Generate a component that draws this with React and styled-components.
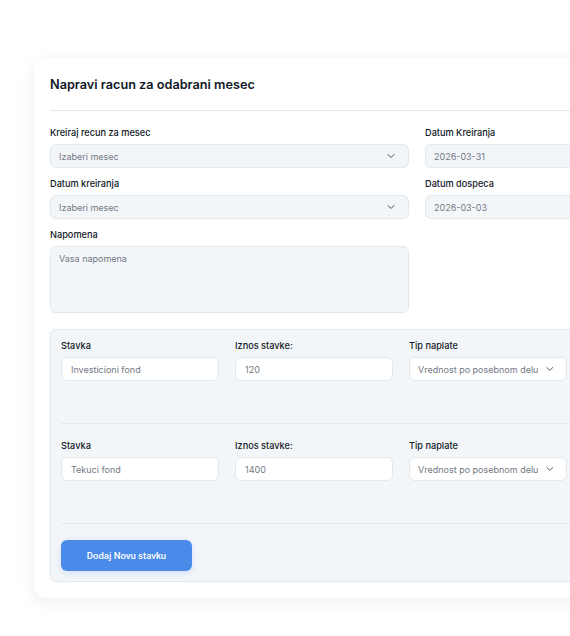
import React from "react";
import styled, { createGlobalStyle } from "styled-components";
import { ChevronDown } from "lucide-react";

const GlobalStyle = createGlobalStyle`
  html, body {
    margin: 0;
    overflow: hidden;
    background: #ffffff;
  }
  body {
    font-family: Inter, "Noto Sans", sans-serif;
    color: #111827;
  }
`;

const stavke = [
  { id: 1, naziv: "Investicioni fond", iznos: "120" },
  { id: 2, naziv: "Tekuci fond", iznos: "1400" },
];

export default function App() {
  return (
    <>
      <GlobalStyle />
      <Page>
        <Card>
          <Title>Napravi racun za odabrani mesec</Title>
          <Divider />
          <FormGrid>
            <Field>
              <Label>Kreiraj recun za mesec</Label>
              <SelectBox>
                <span>Izaberi mesec</span>
                <ChevronDown size={12} strokeWidth={2} />
              </SelectBox>
            </Field>
            <Field>
              <Label>Datum Kreiranja</Label>
              <ReadOnlyBox>2026-03-31</ReadOnlyBox>
            </Field>
            <Field>
              <Label>Datum kreiranja</Label>
              <SelectBox>
                <span>Izaberi mesec</span>
                <ChevronDown size={12} strokeWidth={2} />
              </SelectBox>
            </Field>
            <Field>
              <Label>Datum dospeca</Label>
              <ReadOnlyBox>2026-03-03</ReadOnlyBox>
            </Field>
            <Field>
              <Label>Napomena</Label>
              <NoteBox>Vasa napomena</NoteBox>
            </Field>
          </FormGrid>

          <ItemsPanel>
            {stavke.map((s) => (
              <ItemRow key={s.id}>
                <Field>
                  <Label>Stavka</Label>
                  <WhiteBox>{s.naziv}</WhiteBox>
                </Field>
                <Field>
                  <Label>Iznos stavke:</Label>
                  <WhiteBox>{s.iznos}</WhiteBox>
                </Field>
                <Field>
                  <Label>Tip naplate</Label>
                  <WhiteSelect>
                    <span>Vrednost po posebnom delu</span>
                    <ChevronDown size={12} strokeWidth={2} />
                  </WhiteSelect>
                </Field>
              </ItemRow>
            ))}
            <AddButton>Dodaj Novu stavku</AddButton>
          </ItemsPanel>
        </Card>
      </Page>
    </>
  );
}

const Page = styled.div`
  padding: 58px 0 40px 34px;
  width: 720px;
`;

const Card = styled.div`
  width: 640px;
  background: #ffffff;
  border-radius: 12px;
  padding: 16px;
  box-sizing: border-box;
  box-shadow: 0 4px 18px rgba(15, 23, 42, 0.07), 0 0 2px rgba(15, 23, 42, 0.04);
`;

const Title = styled.h2`
  margin: 0;
  font-size: 12.7px;
  line-height: 21px;
  font-weight: 600;
  color: #111827;
`;

const Divider = styled.div`
  height: 1px;
  background: #e5e7eb;
  margin: 15px 0 16px;
`;

const FormGrid = styled.div`
  display: grid;
  grid-template-columns: 359px 1fr;
  column-gap: 16px;
  row-gap: 10px;
`;

const Field = styled.div`
  display: flex;
  flex-direction: column;
  gap: 5px;
`;

const Label = styled.label`
  font-size: 9.2px;
  line-height: 12px;
  font-weight: 500;
  color: #111827;
`;

const Box = styled.div`
  height: 24px;
  box-sizing: border-box;
  display: flex;
  align-items: center;
  justify-content: space-between;
  gap: 6px;
  padding: 0 8px;
  border-radius: 6px;
  font-size: 9px;
  color: #737985;
  white-space: nowrap;
`;

const SelectBox = styled(Box)`
  background: #f3f6f9;
  border: 1px solid #e3e8ee;
  padding-right: 11px;
  svg {
    color: #4b5563;
  }
`;

const ReadOnlyBox = styled(Box)`
  background: #f3f6f9;
  border: 1px solid #e3e8ee;
`;

const NoteBox = styled(Box)`
  height: 67px;
  align-items: flex-start;
  padding-top: 6px;
  background: #f3f6f9;
  border: 1px solid #e3e8ee;
`;

const ItemsPanel = styled.div`
  margin-top: 16px;
  background: #f3f6f9;
  border: 1px solid #e3e8ee;
  border-radius: 6px;
  padding: 10px;
`;

const ItemRow = styled.div`
  display: grid;
  grid-template-columns: repeat(3, 158px);
  column-gap: 16px;
  padding-bottom: 42px;
  margin-bottom: 16px;
  border-bottom: 1px solid #e3e8ee;
`;

const WhiteBox = styled(Box)`
  background: #ffffff;
  border: 1px solid #e3e8ee;
  padding-left: 9px;
`;

const WhiteSelect = styled(WhiteBox)`
  padding-left: 8px;
  padding-right: 10px;
  svg {
    color: #4b5563;
  }
`;

const AddButton = styled.button`
  width: 131px;
  height: 31px;
  border: none;
  border-radius: 6px;
  background: #4a8bea;
  color: #ffffff;
  font-family: Roboto, "Liberation Sans", sans-serif;
  font-size: 9.5px;
  font-weight: 500;
  box-shadow: 0 2px 6px rgba(74, 139, 234, 0.2);
  cursor: pointer;
`;
